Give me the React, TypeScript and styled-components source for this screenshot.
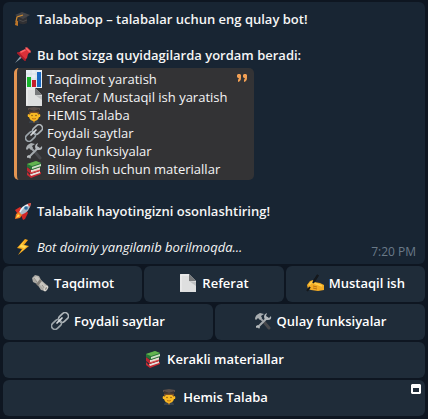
import React from "react";
import styled, { createGlobalStyle } from "styled-components";

const GlobalStyle = createGlobalStyle`
  * { box-sizing: border-box; }
  body {
    margin: 0;
    background: #0e1621;
    color: #f5f5f5;
    font-family: "Open Sans", "Noto Sans", sans-serif;
    font-size: 13px;
    line-height: 18px;
  }
`;

const Chat = styled.main`
  display: flex;
  flex-direction: column;
  gap: 2px;
  padding: 2px 3px 3px;
`;

const Bubble = styled.article`
  padding: 8px 11px;
  border-radius: 6px;
  background: #182533;
`;

const Line = styled.p<{ $bold?: boolean; $italic?: boolean; $compact?: boolean }>`
  display: flex;
  align-items: center;
  gap: ${(p) => (p.$compact ? 4 : 5)}px;
  height: 18px;
  margin: 0;
  white-space: nowrap;
  font-weight: ${(p) => (p.$bold ? 600 : 400)};
  font-style: ${(p) => (p.$italic ? "italic" : "normal")};
`;

const Paragraph = styled.section`
  & + & { margin-top: 18px; }
`;

const Quote = styled.blockquote`
  display: flex;
  align-items: flex-start;
  justify-content: space-between;
  width: fit-content;
  margin: 4px 0 22px;
  padding: 2px 7px 2px 8px;
  gap: 10px;
  border-left: 3px solid #e39552;
  border-radius: 5px;
  background: #333335;
`;

const QuoteIcon = styled.svg`
  width: 10px;
  height: 8px;
  margin-top: 4px;
`;

const Footer = styled.footer`
  display: flex;
  justify-content: space-between;
  align-items: flex-start;
`;

const Time = styled.time`
  margin: 5px -2px -5px 0;
  font-size: 12px;
  color: #6a7a89;
`;

const Keyboard = styled.div`
  display: flex;
  flex-direction: column;
  gap: 2px;
`;

const KeyRow = styled.div`
  display: flex;
  gap: 2px;
`;

const Key = styled.button`
  position: relative;
  display: flex;
  flex: 1 1 0;
  min-width: 0;
  align-items: center;
  justify-content: center;
  gap: 5px;
  height: 36px;
  padding: 0 0 2px;
  border: 0;
  border-radius: 6px;
  background: #1f2c39;
  color: #fff;
  font: inherit;
  font-weight: 600;
  white-space: nowrap;
  cursor: pointer;
`;

const WebAppMark = styled.svg`
  position: absolute;
  top: 4px;
  right: 4px;
  width: 10px;
  height: 10px;
`;

const EmojiSvg = styled.svg`
  flex: none;
  width: 18px;
  height: 18px;
`;

const drawings = {
  cap: (
    <>
      <path d="M4 7v5q4 4 9 1V7z" fill="#303033" />
      <path d="M1 5 8 2l8 3-7 4z" fill="#444447" />
      <path d="M5 10q4 3 8 0" fill="none" stroke="#4c4b4d" />
      <path d="m9 5-6 2-1 5" fill="none" stroke="#cf8a30" strokeWidth="1.3" />
      <path d="m2 10-1 5 3 1V11z" fill="#bd7529" />
    </>
  ),
  pin: (
    <>
      <path d="m1 17 7-9 2 2z" fill="#8b9da9" />
      <path d="m4 7 3-2 4-1 2-3 4 4-3 3-1 4-2 2z" fill="#dc3038" />
      <path d="m4 7 7 7" stroke="#a91d2b" strokeWidth="2" strokeLinecap="round" />
      <path d="m12 2 4 4M7 6l4-2" stroke="#ff6668" strokeWidth="1.6" strokeLinecap="round" />
    </>
  ),
  chart: (
    <>
      <path d="M1 0h16v18H1z" fill="#e8eef3" />
      <path d="M1 4h16M1 9h16M1 14h16M6 0v18M11 0v18" stroke="#c5d2db" strokeWidth=".5" />
      <path d="M2 7h4v10H2z" fill="#18b52b" />
      <path d="M7 10h4v7H7z" fill="#c51e2b" />
      <path d="M12 2h4v15h-4z" fill="#1868c2" />
    </>
  ),
  page: (
    <>
      <path d="M1 0h9l7 7v11H1z" fill="#dedfdf" />
      <path d="M10 0v7h7z" fill="#77797b" />
      <path d="m10 7 7 1v4z" fill="#bfc1c2" />
      <path d="M2 1h8M2 1v16" stroke="#f2f2f2" />
    </>
  ),
  student: (
    <>
      <path d="M4 17q0-3 3-3h4q3 0 3 3z" fill="#39424b" />
      <path d="m7 13 2 4 2-4z" fill="#d78b20" />
      <path d="M4 6h10v2q2 0 1 3h-1q-1 4-5 4t-5-4H3q-1-3 1-3z" fill="#f9b923" />
      <path d="M4 5h10v4l-2-2H6L4 9z" fill="#79502a" />
      <path d="m3 2 6-1 6 1v2L9 5 3 4z" fill="#5a4e49" />
      <path d="M4 3v3q5-1 10 0V3L9 5z" fill="#3d3432" />
      <circle cx="7" cy="9.5" r=".7" fill="#6f4514" />
      <circle cx="11" cy="9.5" r=".7" fill="#6f4514" />
      <path d="M7 12.5q2 1 4 0" fill="none" stroke="#b45e13" strokeWidth=".8" />
    </>
  ),
  link: (
    <g fill="none" strokeWidth="1.7">
      <rect x="7" y="2" width="11" height="7" rx="3.5" transform="rotate(-43 12.5 5.5)" stroke="#aeb5b9" />
      <rect x="0" y="9" width="11" height="7" rx="3.5" transform="rotate(-43 5.5 12.5)" stroke="#9ba4a9" />
      <path d="m6 11 5-5" stroke="#d6dadc" strokeLinecap="round" />
    </g>
  ),
  tools: (
    <>
      <path d="m6 6 4 4" stroke="#9da1a5" strokeWidth="2" />
      <path d="m10 10 5 6" stroke="#48494d" strokeWidth="3" strokeLinecap="round" />
      <path d="M13 6 4 15" stroke="#a5aaae" strokeWidth="2" strokeLinecap="round" />
      <path d="M1 7q0-4 5-6l4 1-3 2 1 2-2 2-2-2-2 2z" fill="#a8adb0" />
      <path d="m13 1-1 3 3 2 2-2q1 4-3 4h-3l-1-3q0-3 3-4z" fill="#b2b7bb" />
      <path d="m2 14 2-1 2 2-1 2-1-2-2 1z" fill="#b6bbbd" />
    </>
  ),
  books: (
    <>
      <path d="m2 12 3 3 11-3v2L6 18l-4-3z" fill="#c62932" />
      <path d="m5 14 10-3v2L6 16z" fill="#e5e0da" />
      <path d="m2 7 4 3 9-3v4l-9 3-4-3z" fill="#bd2731" />
      <path d="m6 10 9-3v3l-9 3z" fill="#e7ddd4" />
      <path d="m5 13 10-3" stroke="#dc4746" />
      <path d="m2 4 9-3 5 2v4l-9 3-5-3z" fill="#277337" />
      <path d="m2 4 9-3 5 2-9 3z" fill="#63b34f" />
      <path d="m7 7 9-3v2L7 9z" fill="#cfdec6" />
    </>
  ),
  rocket: (
    <>
      <path d="m1 8 5-3 4 3-4 5-3-2z" fill="#d82f27" />
      <path d="m7 13 5-5 2 3-3 6-2 1z" fill="#cf2627" />
      <path d="M5 11Q7 3 17 1q-1 9-10 12z" fill="#aab8c6" />
      <path d="M13 2q3-1 4-1l-1 4z" fill="#e24538" />
      <path d="M6 10Q8 5 14 3" fill="none" stroke="#edf4f8" strokeWidth="1.5" />
      <circle cx="12" cy="6" r="1.8" fill="#266a9d" />
      <path d="m5 10-3 2-1 5 5-1 2-3z" fill="#f37922" />
      <path d="m4 12-2 4 4-2z" fill="#ffdf4b" />
    </>
  ),
  bolt: (
    <>
      <path d="m11 1-8 9 5 1-4 6L15 8l-5-1 4-5z" fill="#f6a81c" />
      <path d="M11 2 5 9l5 1-3 4 6-6-5-1z" fill="#ffda52" />
    </>
  ),
  roll: (
    <>
      <path d="m1 4 3-3 4 1 2 4 7 6-3 5-4-1-4-6-4-2z" fill="#aaa8a3" />
      <path d="m2 4 4-2 10 11-2 3z" fill="#c8c5be" />
      <path d="m5 10 4-5 2 2-4 5z" fill="#827e78" />
      <path d="m3 4 3 4m5 3 3 4" stroke="#85827b" strokeWidth=".8" />
      <ellipse cx="15" cy="14.5" rx="3.2" ry="1.7" transform="rotate(-55 15 14.5)" fill="#d9d6cf" />
      <ellipse cx="15" cy="14.5" rx="1.6" ry=".8" transform="rotate(-55 15 14.5)" fill="#98948e" />
    </>
  ),
  writing: (
    <>
      <path d="M2 16 12 1" stroke="#15181c" strokeWidth="2.2" />
      <path d="m1 11 3-4 3-1 1 2 6 1 4 2v5l-6 1-7-1-3-1z" fill="#f3ac24" />
      <path d="m3 11 3-3 2 1 8 3" fill="none" stroke="#ffcf4b" strokeWidth="1.6" />
      <path d="m7 12 4 1m-4 1 4 1" stroke="#b97013" />
      <path d="M7 9 12 1M1 17l3-4" stroke="#15181c" strokeWidth="2" />
    </>
  ),
};

type EmojiName = keyof typeof drawings;

const Emoji = ({ name }: { name: EmojiName }) => (
  <EmojiSvg viewBox="0 0 18 18" aria-hidden="true">
    {drawings[name]}
  </EmojiSvg>
);

type Item = { icon: EmojiName; label: string; webApp?: boolean };

const features: Item[] = [
  { icon: "chart", label: "Taqdimot yaratish" },
  { icon: "page", label: "Referat / Mustaqil ish yaratish" },
  { icon: "student", label: "HEMIS Talaba" },
  { icon: "link", label: "Foydali saytlar" },
  { icon: "tools", label: "Qulay funksiyalar" },
  { icon: "books", label: "Bilim olish uchun materiallar" },
];

const keyboard: Item[][] = [
  [
    { icon: "roll", label: "Taqdimot" },
    { icon: "page", label: "Referat" },
    { icon: "writing", label: "Mustaqil ish" },
  ],
  [
    { icon: "link", label: "Foydali saytlar" },
    { icon: "tools", label: "Qulay funksiyalar" },
  ],
  [{ icon: "books", label: "Kerakli materiallar" }],
  [{ icon: "student", label: "Hemis Talaba", webApp: true }],
];

export default function App() {
  return (
    <>
      <GlobalStyle />
      <Chat>
        <Bubble>
          <Paragraph>
            <Line $bold><Emoji name="cap" />Talababop – talabalar uchun eng qulay bot!</Line>
          </Paragraph>
          <Paragraph>
            <Line $bold><Emoji name="pin" />Bu bot sizga quyidagilarda yordam beradi:</Line>
          </Paragraph>
          <Quote>
            <div>
              {features.map((item) => (
                <Line key={item.label} $compact><Emoji name={item.icon} />{item.label}</Line>
              ))}
            </div>
            <QuoteIcon viewBox="0 0 10 8" aria-hidden="true">
              <path d="M1 0h2l1 1v3q0 3-3 4V6l1-2H1L0 3V1zM7 0h2l1 1v3q0 3-3 4V6l1-2H7L6 3V1z" fill="#f2a054" />
            </QuoteIcon>
          </Quote>
          <Paragraph>
            <Line $bold><Emoji name="rocket" />Talabalik hayotingizni osonlashtiring!</Line>
          </Paragraph>
          <Paragraph>
            <Footer>
              <Line $italic><Emoji name="bolt" />Bot doimiy yangilanib borilmoqda...</Line>
              <Time dateTime="19:20">7:20 PM</Time>
            </Footer>
          </Paragraph>
        </Bubble>
        <Keyboard>
          {keyboard.map((row) => (
            <KeyRow key={row[0].label}>
              {row.map((item) => (
                <Key key={item.label} type="button">
                  <Emoji name={item.icon} />
                  {item.label}
                  {item.webApp && (
                    <WebAppMark viewBox="0 0 10 10" aria-hidden="true">
                      <path d="M1 0h8l1 1v8l-1 1H1L0 9V1zM2 4v4h6V4z" fill="#fff" fillRule="evenodd" />
                    </WebAppMark>
                  )}
                </Key>
              ))}
            </KeyRow>
          ))}
        </Keyboard>
      </Chat>
    </>
  );
}
